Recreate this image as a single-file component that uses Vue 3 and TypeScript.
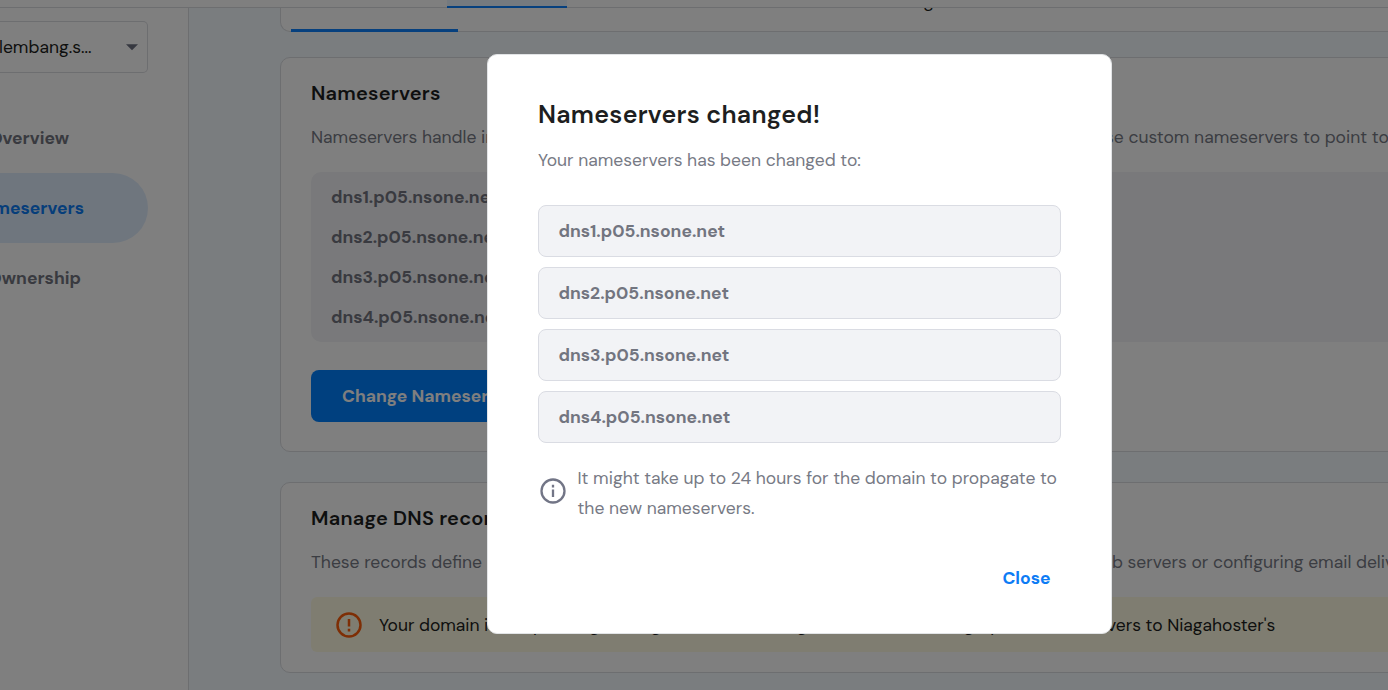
<script setup lang="ts">
const servers: string[] = [1, 2, 3, 4].map((n) => `dns${n}.p05.nsone.net`)
</script>

<template>
  <div class="page">
    <header class="topbar"><span class="topbar-active"></span></header>
    <div class="body">
      <aside class="sidebar">
        <div class="select">
          <span>lembang.s...</span>
          <svg width="12" height="7" viewBox="0 0 12 7"><path d="M0 .3h12L6 6.3z" fill="#6d7081" /></svg>
        </div>
        <nav>
          <a><span>Overview</span></a>
          <a class="current"><span>Nameservers</span></a>
          <a><span>Ownership</span></a>
        </nav>
      </aside>
      <main>
        <section class="card tabs">
          <span class="tab-line"></span><span class="tab-text">Manage</span>
        </section>
        <section class="card ns">
          <h2>Nameservers</h2>
          <p><span class="lead">Nameservers handle internet requests for your domain. You can</span><span>use custom nameservers to point to</span></p>
          <ul class="list"><li v-for="s in servers" :key="s">{{ s }}</li></ul>
          <button class="primary">Change Nameservers</button>
        </section>
        <section class="card dns">
          <h2>Manage DNS records</h2>
          <p><span class="lead dns-lead">These records define how your domain behaves, such as pointing</span><span>web servers or configuring email delivery</span></p>
          <div class="alert">
            <svg width="26" height="26" viewBox="0 0 26 26" fill="none" stroke="#fc5c0a" stroke-width="2.5"><circle cx="13" cy="13" r="11.5" /><path d="M13 7v7.5M13 16.8v2.6" /></svg>
            <span>Your domain is not pointing to Niagahoster. To manage DNS record settings, point nameservers to Niagahoster's</span>
          </div>
        </section>
      </main>
    </div>
    <div class="overlay">
      <div class="modal" role="dialog">
        <h1>Nameservers changed!</h1>
        <p class="sub">Your nameservers has been changed to:</p>
        <div class="boxes"><div v-for="s in servers" :key="s" class="box">{{ s }}</div></div>
        <div class="note">
          <svg width="26" height="26" viewBox="0 0 26 26" fill="none" stroke="#727586" stroke-width="2.3"><circle cx="13" cy="13" r="11.5" /><path d="M13 11.5v7.5M13 6.8v2.6" /></svg>
          <p>It might take up to 24 hours for the domain to propagate to<br />the new nameservers.</p>
        </div>
        <div class="actions"><button class="close">Close</button></div>
      </div>
    </div>
  </div>
</template>

<style>
html, body { margin: 0; overflow: hidden; }
</style>
<style scoped>
* { box-sizing: border-box; }
.page { width: 1388px; height: 690px; overflow: hidden; position: relative; display: flex; flex-direction: column; background: #f4faff; color: #1d1e20; font: 400 17.5px/24px "DM Sans", Inter, sans-serif; font-optical-sizing: none; font-variation-settings: "opsz" 14; }
h1, h2, p, ul { margin: 0; padding: 0; font-weight: 600; }
p { font-weight: 400; color: #777a85; }
button { border: 0; font: inherit; font-weight: 700; font-optical-sizing: none; font-variation-settings: "opsz" 14; }
.topbar { height: 8px; flex: none; background: #fff; border-bottom: 1px solid #dadce0; display: flex; position: relative; z-index: 1; }
.topbar-active { margin-left: 447px; width: 120px; height: 8px; background: #ebf4ff; border-bottom: 2px solid #0d80fc; }
.body { display: flex; flex: 1; min-height: 0; }
.sidebar { width: 189px; flex: none; background: #fff; border-right: 1px solid #dadce0; padding-top: 13px; }
.select { width: 148px; height: 52px; border: 1px solid #dadce0; border-left: 0; border-radius: 0 5px 5px 0; display: flex; align-items: center; justify-content: space-between; padding-right: 9px; }
.select span { margin-left: -1px; }
nav { margin-top: 30px; width: 148px; }
nav a { height: 70px; display: flex; align-items: center; justify-content: flex-end; padding-right: 79px; font-weight: 700; color: #727580; }
nav .current { background: #dfedfd; color: #0d7cf5; border-radius: 0 35px 35px 0; padding-right: 64px; }
nav a:last-child { padding-right: 67px; }
nav span { white-space: nowrap; }
main { flex: 1; min-width: 0; padding-left: 91px; }
.card { width: 1200px; background: #fff; border: 1px solid #dadce0; border-radius: 10px; padding: 0 30px; }
.tabs { height: 24px; border-top: 0; border-radius: 0 0 10px 10px; padding: 0 0 0 10px; display: flex; align-items: flex-end; }
.tab-line { width: 167px; height: 3px; background: #0d80fc; flex: none; margin-bottom: -1px; }
.tab-text { margin: 0 0 18px 422px; }
.ns { height: 395px; margin-top: 25px; padding-top: 22px; }
.dns { height: 191px; margin-top: 30px; padding-top: 22px; }
h2 { font-size: 20px; line-height: 26px; letter-spacing: .22px; }
.card p { margin-top: 19px; display: flex; white-space: nowrap; }
.lead { width: 784px; flex: none; }
.dns-lead { width: 778px; }
.list { list-style: none; background: #f2f3f6; border-radius: 10px; margin-top: 23px; padding: 5px 20px; height: 170px; color: #727580; }
.list li { height: 40px; line-height: 40px; font-weight: 700; }
.primary { margin-top: 28px; height: 52px; width: 240px; padding: 0 0 0 31px; text-align: left; background: #0080ff; color: #fff; border-radius: 8px; display: block; }
.alert { margin-top: 23px; height: 55px; border-radius: 6px; background: #fffbe2; display: flex; align-items: center; padding-left: 25px; white-space: nowrap; letter-spacing: -.035px; }
.alert svg { margin-right: 17px; flex: none; }
.overlay { position: absolute; inset: 0; z-index: 2; background: rgba(0, 0, 0, .5); }
.modal { margin: 54px 0 0 487px; width: 625px; height: 580px; border-radius: 10px; background: #fff; border: 1px solid #e2e4e6; padding: 42px 50px 0; }
h1 { font-size: 25px; line-height: 36px; letter-spacing: .26px; }
.sub { margin-top: 15px; line-height: 24px; }
.boxes { display: flex; flex-direction: column; gap: 10px; margin-top: 33px; }
.box { height: 52px; border: 1px solid #dadce3; border-radius: 8px; background: #f2f3f6; color: #727580; padding-left: 19.5px; line-height: 50px; font-weight: 700; }
.note { display: flex; margin-top: 20px; white-space: nowrap; }
.note svg { margin: 15px 11.5px 0 2px; flex: none; }
.note p { line-height: 30px; }
.actions { display: flex; justify-content: flex-end; margin-top: 39px; padding-right: 10.5px; }
.close { background: none; color: #0d7cf5; padding: 0; height: 32px; }
</style>
